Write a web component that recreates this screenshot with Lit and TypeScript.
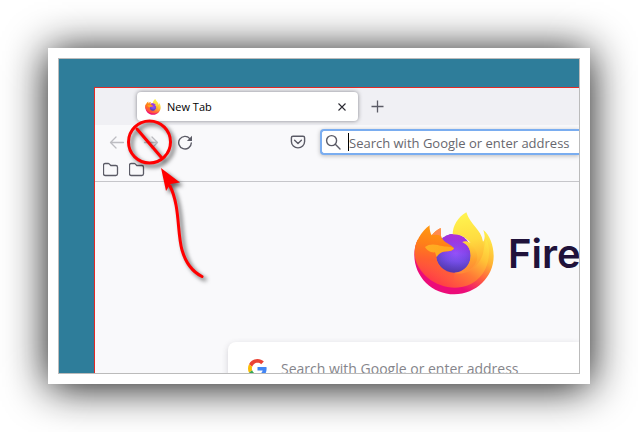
import { LitElement, html, svg, css } from "lit";
import { customElement } from "lit/decorators.js";

@customElement("fox-logo")
export class FoxLogo extends LitElement {
  static styles = css`
    :host {
      display: block;
      flex: none;
    }
    .art {
      display: block;
      width: 100%;
      height: 100%;
    }
  `;

  render() {
    return html`
      <svg class="art" viewBox="39 35 240 249" aria-hidden="true">
        <defs>
          <linearGradient id="rim" gradientUnits="userSpaceOnUse" x1="262" y1="100" x2="150" y2="282">
            <stop offset="0" stop-color="#fff04c" />
            <stop offset="0.35" stop-color="#ffb232" />
            <stop offset="0.6" stop-color="#ff5a40" />
            <stop offset="0.85" stop-color="#ec0c78" />
          </linearGradient>
          <linearGradient id="body" gradientUnits="userSpaceOnUse" x1="235" y1="90" x2="130" y2="260">
            <stop offset="0" stop-color="#fff04c" />
            <stop offset="0.35" stop-color="#ffc236" />
            <stop offset="0.65" stop-color="#ff7a36" />
            <stop offset="1" stop-color="#ff3f45" />
          </linearGradient>
          <linearGradient id="left" gradientUnits="userSpaceOnUse" x1="120" y1="80" x2="95" y2="235">
            <stop offset="0" stop-color="#ff9a10" />
            <stop offset="0.35" stop-color="#ff8018" />
            <stop offset="0.65" stop-color="#ff5f30" />
            <stop offset="1" stop-color="#ff4642" stop-opacity="0" />
          </linearGradient>
          <radialGradient id="globe" cx="0.55" cy="0.5" r="0.62">
            <stop offset="0" stop-color="#9059ff" />
            <stop offset="0.45" stop-color="#7a4ef0" />
            <stop offset="1" stop-color="#5c3fc0" />
          </radialGradient>
          <linearGradient id="glow" x1="0.6" y1="0" x2="0.5" y2="1">
            <stop offset="0" stop-color="#b32fdc" />
            <stop offset="0.5" stop-color="#a52fe0" stop-opacity="0.2" />
            <stop offset="0.7" stop-color="#4a3fa8" stop-opacity="0.15" />
            <stop offset="1" stop-color="#4a2f9a" stop-opacity="0.7" />
          </linearGradient>
          <linearGradient id="tail" gradientUnits="userSpaceOnUse" x1="190" y1="40" x2="215" y2="215">
            <stop offset="0" stop-color="#fff44f" />
            <stop offset="0.45" stop-color="#ffdc40" />
            <stop offset="0.75" stop-color="#ffb834" />
            <stop offset="1" stop-color="#ff8a36" />
          </linearGradient>
          <linearGradient id="curl" gradientUnits="userSpaceOnUse" x1="200" y1="125" x2="185" y2="222">
            <stop offset="0" stop-color="#ffd83c" />
            <stop offset="0.5" stop-color="#ffa22e" />
            <stop offset="1" stop-color="#ff6a38" stop-opacity="0" />
          </linearGradient>
          <linearGradient id="face" x1="0" y1="0" x2="1" y2="0.3">
            <stop offset="0" stop-color="#ffae24" />
            <stop offset="1" stop-color="#ffa81c" />
          </linearGradient>
        </defs>
        <path
          fill="url(#rim)"
          d="M50 118C42 134 40 148 40 164C40 230 94 282 160 282C225 282 278 230 278 168C278 134 266 104 247 89C252 104 252 114 248 122L150 200Z"
        />
        <path
          fill="url(#body)"
          d="M50 118C43 132 41 146 42 160C46 218 102 262 162 262C222 262 266 216 264 150C264 138 260 124 254 114C254 130 248 150 240 160L160 180Z"
        />
        <ellipse cx="158" cy="159" rx="54" ry="58" fill="url(#globe)" />
        <ellipse cx="158" cy="159" rx="54" ry="58" fill="url(#glow)" />
        <path
          fill="url(#tail)"
          d="M196 36C170 50 155 78 155 102C178 102 197 112 209 129C200 122 191 122 184 125C202 134 209 148 209 166C209 194 188 217 160 217C186 226 214 210 230 190C246 172 252 146 246 124C241 88 207 72 196 36Z"
        />
        <path
          fill="url(#curl)"
          d="M184 125C212 126 230 148 229 172C226 200 196 224 158 226C134 224 116 208 108 184C118 206 137 217 160 217C188 216 209 194 209 166C209 146 200 132 184 125Z"
        />
        <path
          fill="url(#left)"
          d="M86 75C60 94 41 126 41 160C41 214 98 258 156 261L160 217C132 216 105 196 106 168C109 159 118 154 138 153C148 152 156 150 159 144C152 136 140 130 134 126C126 119 122 113 120 106L119 83C108 88 98 96 92 105C87 96 85 84 86 75Z"
        />
        <path fill="#ff8a50" d="M119 83C108 88 99 97 93 105C102 102 112 103 120 107Z" />
        <path
          fill="url(#face)"
          d="M72 140C82 131 98 131 110 134C130 140 145 138 159 143C157 150 148 152 138 153C124 153 112 160 107 171C105 166 104 161 102 156C90 158 77 149 72 140Z"
        />
      </svg>
    `;
  }
}

@customElement("app-root")
export class AppRoot extends LitElement {
  static styles = css`
    :host {
      display: flex;
      box-sizing: border-box;
      height: 100vh;
      padding: 48px;
      background: #fff;
      font-family: "Open Sans", "Noto Sans", sans-serif;
      color: #15141a;
      overflow: hidden;
    }
    .frame {
      display: flex;
      flex: 1;
      min-width: 0;
      padding: 10px;
      background: #fff;
      box-shadow: 0 3px 40px rgba(0, 0, 0, 0.95);
    }
    .desktop {
      flex: 1;
      min-width: 0;
      box-sizing: border-box;
      padding: 28px 0 0 35px;
      border: 1px solid #bbb;
      background: #2e7d9a;
      overflow: hidden;
    }
    .browser {
      position: relative;
      display: flex;
      flex-direction: column;
      min-height: 100%;
      border: solid #e22b26;
      border-width: 1px 0 0 1px;
      background: #f9f9fb;
    }
    svg {
      display: block;
      flex: none;
    }
    button {
      display: flex;
      align-items: center;
      justify-content: center;
      margin: 0;
      padding: 0;
      border: 0;
      background: none;
      color: #5b5b66;
      flex: none;
    }
    button:disabled {
      color: #bdbdc2;
    }
    .tabs {
      display: flex;
      align-items: center;
      height: 37px;
      padding-left: 42px;
      background: #f0f0f4;
    }
    .tab {
      display: flex;
      align-items: center;
      box-sizing: border-box;
      width: 221px;
      height: 29px;
      padding: 0 8px;
      gap: 6px;
      border-radius: 4px;
      background: #fff;
      box-shadow: 0 0 4px rgba(60, 60, 70, 0.6);
      font-size: 11px;
      line-height: 16px;
      color: #000;
    }
    .tab-icon {
      width: 16px;
      height: 16px;
    }
    .tab-title {
      flex: 1;
    }
    .tab-close {
      width: 16px;
      height: 16px;
      color: #2b2a33;
    }
    .tab-add {
      width: 38px;
      height: 29px;
    }
    .nav {
      display: flex;
      align-items: center;
      height: 34px;
      padding-left: 5px;
    }
    .nav button {
      width: 34px;
      height: 26px;
    }
    .save {
      margin: 0 5px 0 79px;
    }
    .urlbar {
      display: flex;
      align-items: center;
      flex: 1;
      min-width: 0;
      box-sizing: border-box;
      height: 26px;
      padding-left: 3px;
      border: 2px solid #7aadf0;
      border-right: 0;
      border-radius: 4px 0 0 4px;
      background: #fff;
      box-shadow: 0 1px 4px rgba(0, 0, 0, 0.25);
      color: #5b5b66;
    }
    .caret {
      flex: none;
      width: 1px;
      height: 18px;
      margin-left: 7px;
      background: #000;
    }
    input {
      flex: 1;
      min-width: 0;
      margin: 0;
      padding: 0;
      border: 0;
      outline: 0;
      background: none;
      font-family: inherit;
      font-size: 13px;
      color: #15141a;
    }
    .urlbar input {
      padding-top: 2px;
    }
    input::placeholder {
      color: #67676e;
      opacity: 1;
    }
    .bookmarks {
      display: flex;
      align-items: center;
      gap: 10px;
      height: 22px;
      padding-left: 8px;
      border-bottom: 1px solid #c6c6ca;
    }
    .page {
      padding-top: 30px;
    }
    .brand {
      display: flex;
      align-items: center;
      gap: 14px;
      padding-left: 319px;
    }
    .brand-logo {
      width: 80px;
      height: 83px;
    }
    .brand-name {
      font-family: Inter, sans-serif;
      font-size: 40px;
      font-weight: 600;
      line-height: 48px;
      color: #20123a;
    }
    .search {
      display: flex;
      align-items: center;
      gap: 14px;
      height: 52px;
      margin: 47px 0 0 133px;
      padding-left: 20px;
      border-radius: 8px 0 0 8px;
      background: #fff;
      box-shadow: 0 2px 6px rgba(58, 57, 68, 0.2);
    }
    .search input {
      font-size: 14px;
    }
    .search input::placeholder {
      color: #85858b;
    }
    .marks {
      position: absolute;
      top: 0;
      left: 0;
      filter: drop-shadow(3px 3px 2px rgba(0, 0, 0, 0.6));
      pointer-events: none;
    }
  `;

  private folder() {
    return html`
      <button aria-label="Bookmark folder">
        <svg width="16" height="16" viewBox="0 0 16 16" fill="none" stroke="currentColor" stroke-width="1.3">
          <path
            d="M2.1 1.5H5.2Q5.8 1.5 6.2 1.9L7.8 3.5H12.8Q14.5 3.5 14.5 5.2V11.8Q14.5 13.5 12.8 13.5H2.2Q.5 13.5 .5 11.8V3.1Q.5 1.5 2.1 1.5Z"
          />
        </svg>
      </button>
    `;
  }

  private arrow(path: string) {
    return svg`<path d=${path} fill="none" stroke="currentColor" stroke-width="1.3" stroke-linecap="round" stroke-linejoin="round" />`;
  }

  render() {
    return html`
      <div class="frame">
        <div class="desktop">
          <div class="browser">
            <div class="tabs">
              <div class="tab">
                <fox-logo class="tab-icon"></fox-logo>
                <span class="tab-title">New Tab</span>
                <button class="tab-close" aria-label="Close tab">
                  <svg width="16" height="16" viewBox="0 0 16 16">
                    <path d="M4.500 4.500L11.500 11.500M11.500 4.500L4.500 11.500" stroke="currentColor" stroke-width="1.1" />
                  </svg>
                </button>
              </div>
              <button class="tab-add" aria-label="New tab">
                <svg width="16" height="16" viewBox="0 0 16 16">
                  <path d="M8.5 1.5V13.5M2.5 7.5H14.5" stroke="currentColor" stroke-width="1.3" />
                </svg>
              </button>
            </div>
            <div class="nav">
              <button disabled aria-label="Back">
                <svg width="16" height="16" viewBox="0 0 16 16">${this.arrow("M14.5 8.5H1.5M7 3L1.5 8.5L7 14")}</svg>
              </button>
              <button disabled aria-label="Forward">
                <svg width="16" height="16" viewBox="0 0 16 16">${this.arrow("M1.5 8.5H14.5M9 3L14.5 8.5L9 14")}</svg>
              </button>
              <button aria-label="Reload">
                <svg width="16" height="16" viewBox="0 0 16 16">
                  <path
                    d="M12.8 4.6A6.3 6.3 0 1 0 14.3 8.9"
                    fill="none"
                    stroke="currentColor"
                    stroke-width="1.4"
                    stroke-linecap="round"
                  />
                  <path d="M15 1.8V6.4Q15 6.9 14.5 6.9H9.9Z" fill="currentColor" />
                </svg>
              </button>
              <button class="save" aria-label="Save to Pocket">
                <svg width="16" height="16" viewBox="0 0 16 16" fill="none" stroke="currentColor" stroke-width="1.4">
                  <path d="M3 2.2H13Q14.6 2.2 14.6 3.8V7.6A6.6 6.3 0 0 1 1.4 7.6V3.8Q1.4 2.2 3 2.2Z" />
                  <path d="M4.6 6.2L8 9.5L11.4 6.2" stroke-linecap="round" stroke-linejoin="round" />
                </svg>
              </button>
              <div class="urlbar">
                <svg width="16" height="16" viewBox="0 0 16 16" fill="none" stroke="currentColor" stroke-width="1.4">
                  <circle cx="6.6" cy="6.6" r="5" />
                  <path d="M10.3 10.3L15 15" stroke-linecap="round" />
                </svg>
                <span class="caret"></span>
                <input
                  type="text"
                  aria-label="Address bar"
                  placeholder="Search with Google or enter address"
                />
              </div>
            </div>
            <div class="bookmarks">${this.folder()}${this.folder()}</div>
            <div class="page">
              <div class="brand">
                <fox-logo class="brand-logo"></fox-logo>
                <span class="brand-name">Fire</span>
              </div>
              <div class="search">
                <svg width="19" height="19" viewBox="0 0 48 48">
                  <path
                    fill="#ea4335"
                    d="M24 9.5c3.54 0 6.71 1.22 9.21 3.6l6.85-6.85C35.9 2.38 30.47 0 24 0 14.62 0 6.51 5.38 2.56 13.22l7.98 6.19C12.43 13.72 17.74 9.5 24 9.5z"
                  />
                  <path
                    fill="#4285f4"
                    d="M46.98 24.55c0-1.57-.15-3.09-.38-4.55H24v9.02h12.94c-.58 2.96-2.26 5.48-4.78 7.18l7.73 6c4.51-4.18 7.09-10.36 7.09-17.65z"
                  />
                  <path
                    fill="#fbbc05"
                    d="M10.53 28.59c-.48-1.45-.76-2.99-.76-4.59s.27-3.14.76-4.59l-7.98-6.19C.92 16.46 0 20.12 0 24c0 3.88.92 7.54 2.56 10.78l7.97-6.19z"
                  />
                  <path
                    fill="#34a853"
                    d="M24 48c6.48 0 11.93-2.13 15.89-5.81l-7.73-6c-2.15 1.45-4.92 2.3-8.16 2.3-6.26 0-11.57-4.22-13.47-9.91l-7.98 6.19C6.51 42.62 14.62 48 24 48z"
                  />
                </svg>
                <input
                  type="text"
                  aria-label="Search the web"
                  placeholder="Search with Google or enter address"
                />
              </div>
            </div>
            <svg class="marks" width="120" height="210" viewBox="95 88 120 210" aria-hidden="true">
              <g fill="none" stroke="#f00" stroke-width="3" stroke-linecap="round">
                <circle cx="149.5" cy="142" r="21" />
                <path d="M137 129L161 157" />
                <path d="M170 186C180 206 177 232 182 250C186 264 193 272 202 276.5" />
              </g>
              <path d="M161 168L180 182.5L170.5 184L166 191Z" fill="#f00" />
            </svg>
          </div>
        </div>
      </div>
    `;
  }
}
